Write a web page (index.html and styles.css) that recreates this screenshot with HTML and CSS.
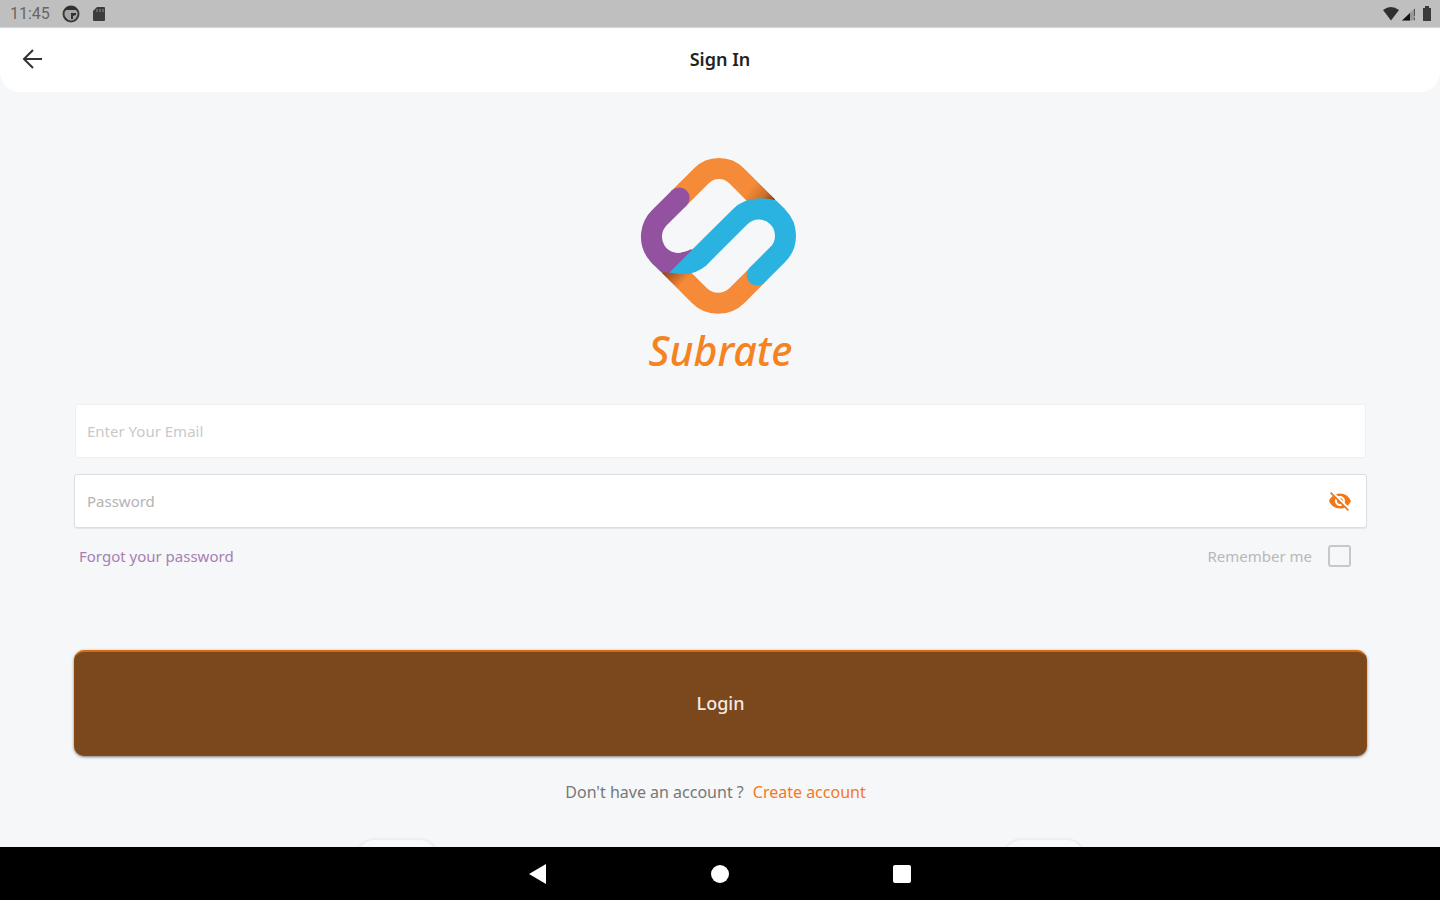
FILE: index.html
```html
<!DOCTYPE html>
<html lang="en">
<head>
<meta charset="utf-8">
<meta name="viewport" content="width=device-width, initial-scale=1">
<title>Subrate - Sign In</title>
<link rel="stylesheet" href="styles.css">
</head>
<body>
<div class="screen">
  <div class="status">
    <div class="status-group">
      <span class="clock">11:45</span>
      <svg class="status-app" width="18" height="18" viewBox="0 0 18 18" aria-hidden="true">
        <circle cx="9" cy="9" r="7.5" fill="#a5a5a5" stroke="#3c3c3c" stroke-width="2"/>
        <path d="M2 6A7.5 7.5 0 0 1 16 6L14 5H4Z" fill="#303030"/>
        <path d="M9 8h5v2l-3 1v3H9z" fill="#303030"/>
        <path d="M2 11l5 5.500A8 8 0 0 1 2 11z" fill="#303030"/>
      </svg>
      <svg class="status-card" width="14" height="16" viewBox="0 0 14 16" aria-hidden="true">
        <path d="M5 1h7q1 0 1 1v12q0 1-1 1H2q-1 0-1-1V5z" fill="#3c3c3c"/>
        <path d="M5 3v3M8 3v3M11 3v3" stroke="#8c8c8c"/>
      </svg>
    </div>
    <div class="status-group status-right">
      <svg width="16" height="14" viewBox="0 0 16 14" aria-hidden="true"><path d="M0 3Q8-3 16 3L8 13.500z" fill="#303030"/></svg>
      <svg width="14" height="14" viewBox="0 0 14 14" aria-hidden="true"><path d="M0 13.500L13 1v12.500z" fill="#999"/><path d="M0 13.500L8 6v7.500z" fill="#111"/><path d="M12.500 2v7M12.500 11v2" stroke="#555"/></svg>
      <svg class="battery" width="10" height="15" viewBox="0 0 10 15" aria-hidden="true"><path d="M3 0h4v2h2v13H1V2h2z" fill="#3a3a3a"/></svg>
    </div>
  </div>
  <header class="header">
    <button class="back" type="button" aria-label="Back">
      <svg width="22" height="20" viewBox="0 0 22 20" aria-hidden="true"><path d="M11 1L2 10l9 9M2 10h18" fill="none" stroke="#333" stroke-width="2"/></svg>
    </button>
    <h1 class="title">Sign In</h1>
  </header>
  <main class="content">
    <div class="brand">
      <svg class="logo" width="157" height="158" viewBox="60 50 470 474" aria-hidden="true">
        <defs>
          <linearGradient id="shadeTop" gradientUnits="userSpaceOnUse" x1="385" y1="120" x2="465" y2="185"><stop offset=".2" stop-color="#f58a38"/><stop offset=".65" stop-color="#c96f2b"/><stop offset="1" stop-color="#6d3210"/></linearGradient>
          <linearGradient id="shadeBottom" gradientUnits="userSpaceOnUse" x1="190" y1="450" x2="130" y2="390"><stop offset=".2" stop-color="#f58a38"/><stop offset="1" stop-color="#8a3f14"/></linearGradient>
        </defs>
        <g fill="none" stroke-width="63">
          <path d="M177 173L243.500 106.500A75 75 0 0 1 349.500 106.500L443 200" stroke="url(#shadeTop)"/>
          <path d="M411 405L350.500 465.500A80 80 0 0 1 237.500 465.500L147 375" stroke="url(#shadeBottom)"/>
          <path d="M177 173L117.400 232.400A80 80 0 0 0 201.400 364.200" stroke="#93529f"/>
          <path d="M411 404L472.600 342.600A80 80 0 0 0 359.400 229.400L235 353.800" stroke="#2ab2e0"/>
        </g>
        <circle cx="177" cy="173" r="31.500" fill="#93529f"/>
        <circle cx="411" cy="404" r="31.500" fill="#2ab2e0"/>
        <path d="M95 368L123 396L150 397L160 380L130 345z" fill="#93529f"/>
        <path d="M184 336.500Q200 334 214 326L216 332L190 360z" fill="#93529f"/>
        <path d="M416 174.500Q445 173 467 180L495 207L440 220z" fill="#2ab2e0"/>
        <path d="M220 324.500L148 396.500Q215 413 258 375.500L280 330z" fill="#2ab2e0"/>
      </svg>
      <div class="brand-name">Subrate</div>
    </div>
    <form class="form">
      <input class="field field-email" type="email" placeholder="Enter Your Email" aria-label="Email">
      <div class="field field-password">
        <input class="field-input" type="password" placeholder="Password" aria-label="Password">
        <button class="eye" type="button" aria-label="Show password">
          <svg width="26" height="24" viewBox="0 0 24 24" aria-hidden="true"><path fill="#f07818" d="M12 7c2.760 0 5 2.240 5 5 0 .650-.130 1.260-.360 1.830l2.920 2.920c1.510-1.260 2.700-2.890 3.430-4.750-1.730-4.390-6-7.500-11-7.500-1.400 0-2.740.250-3.980.700l2.160 2.160C10.740 7.130 11.350 7 12 7zM2 4.270l2.280 2.280.460.460C3.080 8.300 1.780 10.020 1 12c1.730 4.390 6 7.500 11 7.500 1.550 0 3.030-.300 4.380-.840l.420.420L19.730 22 21 20.730 3.270 3 2 4.270zM7.530 9.800l1.550 1.550c-.050.210-.080.430-.080.650 0 1.660 1.340 3 3 3 .220 0 .440-.030.650-.080l1.550 1.550c-.670.330-1.410.530-2.200.530-2.760 0-5-2.240-5-5 0-.790.200-1.530.530-2.200zm4.310-.780l3.150 3.150.020-.160c0-1.660-1.340-3-3-3l-.170.010z"/></svg>
        </button>
      </div>
      <div class="options">
        <a class="forgot" href="#">Forgot your password</a>
        <label class="remember">Remember me <input class="check" type="checkbox"></label>
      </div>
      <button class="login" type="submit">Login</button>
    </form>
    <p class="signup">Don't have an account ? <a class="create" href="#">Create account</a></p>
    <div class="socials">
      <button class="social" type="button" aria-label="First sign-in provider"></button>
      <button class="social" type="button" aria-label="Second sign-in provider"></button>
    </div>
  </main>
  <nav class="navbar">
    <button class="nav" type="button" aria-label="Back"><svg width="20" height="22" viewBox="0 0 20 22" aria-hidden="true"><path d="M1 11L18 1v20z" fill="#fff"/></svg></button>
    <button class="nav" type="button" aria-label="Home"><svg width="20" height="20" viewBox="0 0 20 20" aria-hidden="true"><circle cx="10" cy="10" r="9" fill="#fff"/></svg></button>
    <button class="nav" type="button" aria-label="Recent apps"><svg width="20" height="20" viewBox="0 0 20 20" aria-hidden="true"><rect x="1" y="1" width="18" height="18" rx="2" fill="#fff"/></svg></button>
  </nav>
</div>
</body>
</html>
```
FILE: styles.css
```css
* { box-sizing: border-box; }
body { margin: 0; font-family: "Noto Sans", sans-serif; background: #f5f7f9; }
button { padding: 0; border: 0; background: none; font: inherit; cursor: pointer; }
svg { display: block; }
a { text-decoration: none; }

.screen { display: flex; flex-direction: column; height: 100vh; overflow: hidden; }

.status { display: flex; justify-content: space-between; align-items: center; flex: none; height: 28px; padding: 0 8px 0 10px; background: #bfbfbf; border-bottom: 1px solid #d4d4d4; }
.status-group { display: flex; align-items: center; gap: 12px; }
.status-right { gap: 3px; }
.battery { margin-left: 3px; }
.clock { font-family: Roboto, sans-serif; font-size: 16px; color: #666; }

.header { display: grid; grid-template-columns: 1fr auto 1fr; align-items: center; flex: none; height: 64px; padding: 0 22px 3px; background: #fff; border-radius: 0 0 20px 20px; }
.back { justify-self: start; }
.title { margin: 0; font-size: 18px; font-weight: 600; line-height: 24px; color: #222; }

.content { flex: 1; min-height: 0; overflow: hidden; padding: 65px 73px 0 74px; }
.brand { display: flex; flex-direction: column; align-items: center; }
.logo { margin-right: 4px; }
.brand-name { margin-top: 7px; font-size: 41px; font-style: italic; font-weight: 500; line-height: 56px; color: #f5831f; }

.form { display: flex; flex-direction: column; margin-top: 26px; }
.field { height: 54px; background: #fff; border: 1px solid #eef0f1; border-radius: 3px; }
.field-email { margin: 0 1px 16px; padding: 0 11px; font: 15px "Noto Sans", sans-serif; }
.field-password { display: flex; align-items: center; padding: 0 13px 0 12px; border-color: #dcdfe1; box-shadow: 0 1px 1px #e4e6e8; }
.field-input { flex: 1; min-width: 0; padding: 0; border: 0; outline: 0; background: none; font: 15px "Noto Sans", sans-serif; }
.field-email::placeholder { color: #c9c9c9; opacity: 1; }
.field-input::placeholder { color: #b3b3b3; opacity: 1; }

.options { display: flex; justify-content: space-between; align-items: center; height: 24px; margin-top: 16px; padding: 0 16px 0 5px; font-size: 15px; }
.forgot { color: #a77fb2; }
.remember { display: flex; align-items: center; gap: 16px; color: #b8b8b8; }
.check { appearance: none; width: 23px; height: 22px; margin: 0; border: 2px solid #c6c8c9; border-radius: 3px; }
.check:checked { background: #f5831f; }

.login { height: 106px; margin-top: 82px; padding-bottom: 2px; background: #7b471d; border: 1px solid #8a4a14; border-top: 2px solid #d96c0c; border-radius: 10px; box-shadow: 0 1px 3px #777; font-size: 18px; font-weight: 500; color: #f3e9e2; }

.signup { display: flex; justify-content: center; gap: 9px; margin: 24px 10px 0 0; font-size: 16px; line-height: 24px; color: #777; }
.create { color: #f5771f; }

.socials { display: grid; grid-template-columns: 1fr 1fr; justify-items: center; margin-top: 34px; }
.social { width: 84px; height: 64px; background: #f9fafb; border: 2px solid #eceeef; border-radius: 20px; }

.navbar { display: flex; justify-content: center; align-items: center; gap: 162px; flex: none; height: 53px; background: #000; }
```
